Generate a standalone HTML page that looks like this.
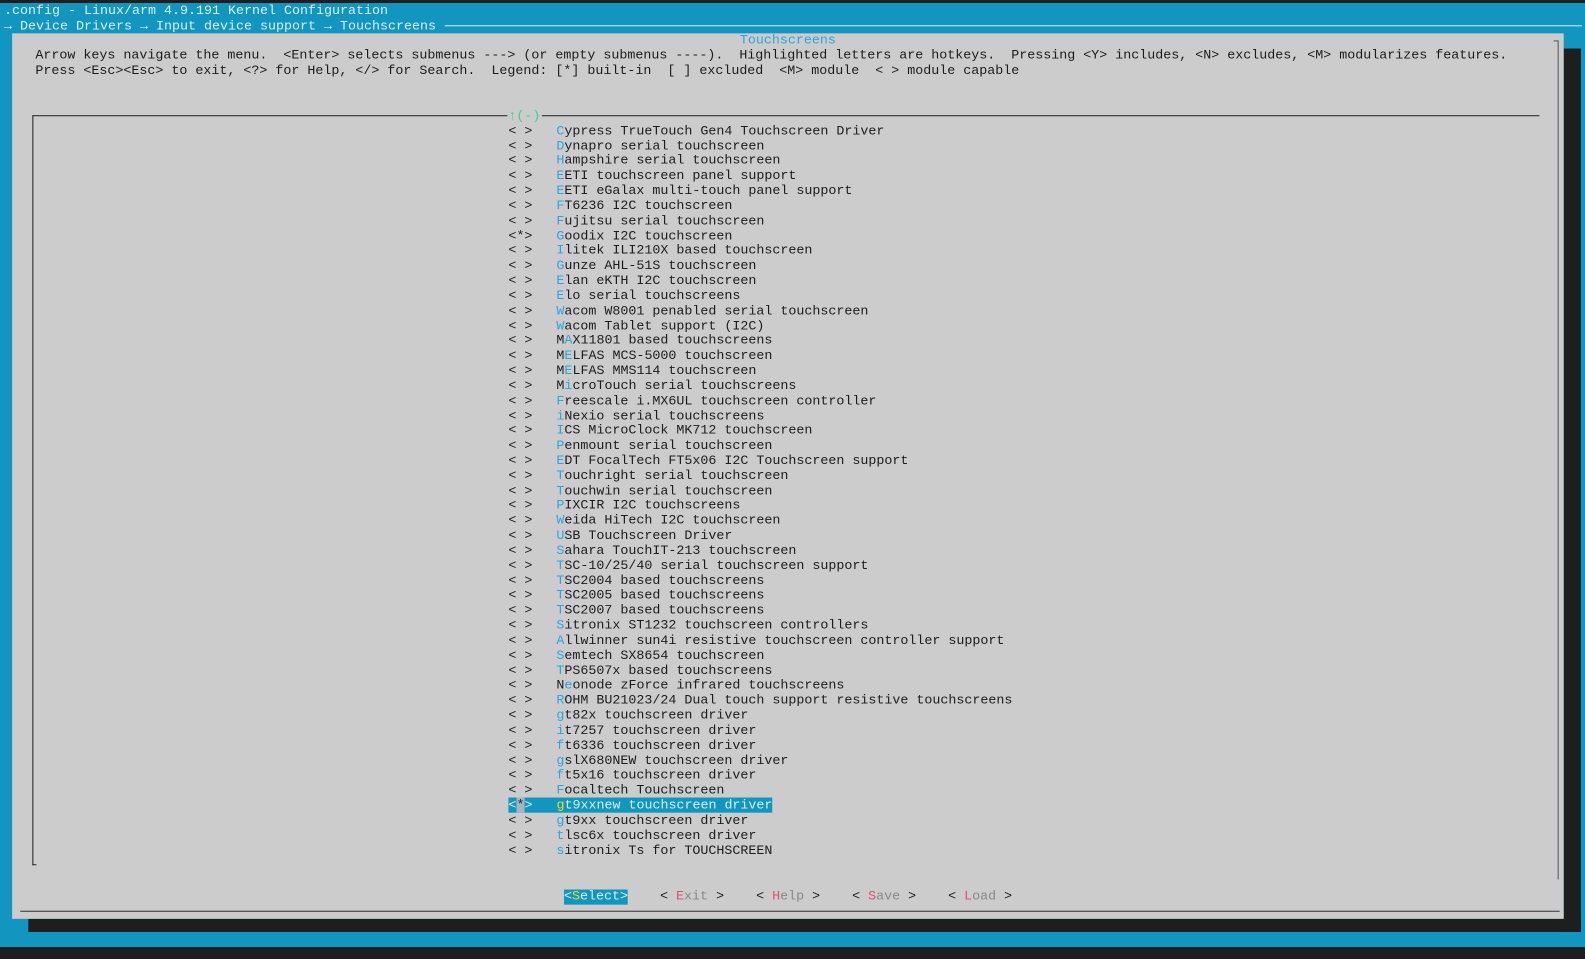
<!DOCTYPE html>
<html><head><meta charset="utf-8"><style>
html,body{margin:0;padding:0}
body{width:1585px;height:949px;background:#1296c0;position:relative;overflow:hidden;font-family:"Liberation Mono","DejaVu Sans Mono",monospace;font-size:13.2px;line-height:14.83px;color:#1c1c1c}
#s{position:absolute;left:0;top:0;width:1568px;height:939px;transform:scale(1.0108);transform-origin:0 0}
.a{position:absolute;white-space:pre;margin:0}
.t{margin-top:1.2px}
.h{color:#2aa6dc}
.w{color:#d6eef6}
</style></head><body><div id="s">
<div class="a" style="left:0;top:0;width:1585px;height:3px;background:#1e1e1e"></div>
<div class="a w t" style="left:4px;top:2.5px">.config - Linux/arm 4.9.191 Kernel Configuration</div>
<div class="a w t" style="left:4px;top:17.4px">→ Device Drivers → Input device support → Touchscreens</div>
<div class="a" style="left:440px;top:25px;width:1125px;height:1px;background:#d6eef6"></div>
<div class="a" style="left:1547px;top:48px;width:17px;height:874px;background:#1e1e1e"></div>
<div class="a" style="left:28px;top:909px;width:1536px;height:13px;background:#1e1e1e"></div>
<div class="a" style="left:0;top:937px;width:1585px;height:12px;background:#1e1e1e"></div>
<div class="a" style="left:12px;top:33px;width:1535px;height:876px;background:#cccccc"></div>
<div class="a" style="left:1541px;top:40px;width:1px;height:830px;background:#555"></div>
<div class="a" style="left:1537px;top:40px;width:5px;height:1px;background:#555"></div>
<div class="a" style="left:20px;top:901px;width:1523px;height:1px;background:#333"></div>
<div class="a t" style="left:732px;top:32.3px;color:#2aa6dc">Touchscreens</div>
<div class="a t" style="left:35px;top:47.2px">Arrow keys navigate the menu.  &lt;Enter&gt; selects submenus ---&gt; (or empty submenus ----).  Highlighted letters are hotkeys.  Pressing &lt;Y&gt; includes, &lt;N&gt; excludes, &lt;M&gt; modularizes features.
Press &lt;Esc&gt;&lt;Esc&gt; to exit, &lt;?&gt; for Help, &lt;/&gt; for Search.  Legend: [*] built-in  [ ] excluded  &lt;M&gt; module  &lt; &gt; module capable</div>
<div class="a" style="left:32px;top:114px;width:470px;height:1px;background:#222"></div>
<div class="a" style="left:536px;top:114px;width:987px;height:1px;background:#222"></div>
<div class="a" style="left:32px;top:114px;width:1px;height:742px;background:#222"></div>
<div class="a" style="left:32px;top:855px;width:4px;height:1px;background:#222"></div>
<div class="a t" style="left:503px;top:106.7px;color:#3ccf8e">↑(-)</div>
<div class="a" style="left:503px;top:789px;width:261px;height:15px;background:#1296c0"></div>
<div class="a t" style="left:503px;top:121.6px">&lt; &gt;   <span class="h">C</span>ypress TrueTouch Gen4 Touchscreen Driver
&lt; &gt;   <span class="h">D</span>ynapro serial touchscreen
&lt; &gt;   <span class="h">H</span>ampshire serial touchscreen
&lt; &gt;   <span class="h">E</span>ETI touchscreen panel support
&lt; &gt;   <span class="h">E</span>ETI eGalax multi-touch panel support
&lt; &gt;   <span class="h">F</span>T6236 I2C touchscreen
&lt; &gt;   <span class="h">F</span>ujitsu serial touchscreen
&lt;*&gt;   <span class="h">G</span>oodix I2C touchscreen
&lt; &gt;   <span class="h">I</span>litek ILI210X based touchscreen
&lt; &gt;   <span class="h">G</span>unze AHL-51S touchscreen
&lt; &gt;   <span class="h">E</span>lan eKTH I2C touchscreen
&lt; &gt;   <span class="h">E</span>lo serial touchscreens
&lt; &gt;   <span class="h">W</span>acom W8001 penabled serial touchscreen
&lt; &gt;   <span class="h">W</span>acom Tablet support (I2C)
&lt; &gt;   M<span class="h">A</span>X11801 based touchscreens
&lt; &gt;   M<span class="h">E</span>LFAS MCS-5000 touchscreen
&lt; &gt;   M<span class="h">E</span>LFAS MMS114 touchscreen
&lt; &gt;   M<span class="h">i</span>croTouch serial touchscreens
&lt; &gt;   <span class="h">F</span>reescale i.MX6UL touchscreen controller
&lt; &gt;   <span class="h">i</span>Nexio serial touchscreens
&lt; &gt;   <span class="h">I</span>CS MicroClock MK712 touchscreen
&lt; &gt;   <span class="h">P</span>enmount serial touchscreen
&lt; &gt;   <span class="h">E</span>DT FocalTech FT5x06 I2C Touchscreen support
&lt; &gt;   <span class="h">T</span>ouchright serial touchscreen
&lt; &gt;   <span class="h">T</span>ouchwin serial touchscreen
&lt; &gt;   <span class="h">P</span>IXCIR I2C touchscreens
&lt; &gt;   <span class="h">W</span>eida HiTech I2C touchscreen
&lt; &gt;   <span class="h">U</span>SB Touchscreen Driver
&lt; &gt;   <span class="h">S</span>ahara TouchIT-213 touchscreen
&lt; &gt;   <span class="h">T</span>SC-10/25/40 serial touchscreen support
&lt; &gt;   <span class="h">T</span>SC2004 based touchscreens
&lt; &gt;   <span class="h">T</span>SC2005 based touchscreens
&lt; &gt;   <span class="h">T</span>SC2007 based touchscreens
&lt; &gt;   <span class="h">S</span>itronix ST1232 touchscreen controllers
&lt; &gt;   <span class="h">A</span>llwinner sun4i resistive touchscreen controller support
&lt; &gt;   <span class="h">S</span>emtech SX8654 touchscreen
&lt; &gt;   <span class="h">T</span>PS6507x based touchscreens
&lt; &gt;   N<span class="h">e</span>onode zForce infrared touchscreens
&lt; &gt;   <span class="h">R</span>OHM BU21023/24 Dual touch support resistive touchscreens
&lt; &gt;   <span class="h">g</span>t82x touchscreen driver
&lt; &gt;   <span class="h">i</span>t7257 touchscreen driver
&lt; &gt;   <span class="h">f</span>t6336 touchscreen driver
&lt; &gt;   <span class="h">g</span>slX680NEW touchscreen driver
&lt; &gt;   <span class="h">f</span>t5x16 touchscreen driver
&lt; &gt;   <span class="h">F</span>ocaltech Touchscreen
<span style="color:#d6eef6">&lt;<span style="background:#a8b4c4;color:#222">*</span>&gt;   <span style="color:#e8e020">g</span>t9xxnew touchscreen driver</span>
&lt; &gt;   <span class="h">g</span>t9xx touchscreen driver
&lt; &gt;   <span class="h">t</span>lsc6x touchscreen driver
&lt; &gt;   <span class="h">s</span>itronix Ts for TOUCHSCREEN</div>
<div class="a t" style="left:558px;top:878.5px;background:#1296c0;color:#d6eef6">&lt;<span style="color:#e8e020">S</span>elect&gt;</div>
<div class="a t" style="left:653px;top:878.5px">&lt; <span style="color:#e0506a">E</span><span style="color:#888">xit</span> &gt;</div>
<div class="a t" style="left:748px;top:878.5px">&lt; <span style="color:#e0506a">H</span><span style="color:#888">elp</span> &gt;</div>
<div class="a t" style="left:843px;top:878.5px">&lt; <span style="color:#e0506a">S</span><span style="color:#888">ave</span> &gt;</div>
<div class="a t" style="left:938px;top:878.5px">&lt; <span style="color:#e0506a">L</span><span style="color:#888">oad</span> &gt;</div>
</div></body></html>
